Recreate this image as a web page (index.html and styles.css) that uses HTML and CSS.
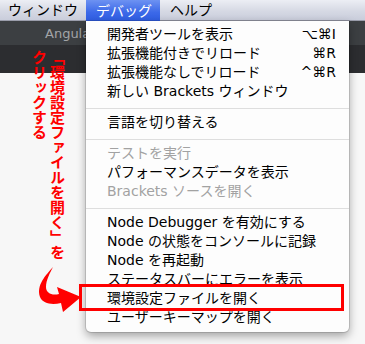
FILE: index.html
```html
<!DOCTYPE html>
<html lang="ja">
<head>
<meta charset="utf-8">
<title>Brackets デバッグメニュー</title>
<link rel="stylesheet" href="styles.css">
</head>
<body>
<div class="screen">
  <div class="menubar">
    <span class="mb-item first">ウィンドウ</span>
    <span class="mb-item active">デバッグ</span>
    <span class="mb-item">ヘルプ</span>
  </div>
  <div class="tabbar"><span class="tab-title">Angular</span></div>
  <div class="darkband"></div>
  <div class="content"></div>

  <div class="menu">
    <div class="mi"><span>開発者ツールを表示</span><span class="sc">⌥⌘I</span></div>
    <div class="mi"><span>拡張機能付きでリロード</span><span class="sc">⌘R</span></div>
    <div class="mi"><span>拡張機能なしでリロード</span><span class="sc">^⌘R</span></div>
    <div class="mi"><span>新しい Brackets ウィンドウ</span></div>
    <div class="sep"></div>
    <div class="mi"><span>言語を切り替える</span></div>
    <div class="sep"></div>
    <div class="mi disabled"><span>テストを実行</span></div>
    <div class="mi"><span>パフォーマンスデータを表示</span></div>
    <div class="mi disabled"><span>Brackets ソースを開く</span></div>
    <div class="sep"></div>
    <div class="mi"><span>Node Debugger を有効にする</span></div>
    <div class="mi"><span>Node の状態をコンソールに記録</span></div>
    <div class="mi"><span>Node を再起動</span></div>
    <div class="mi"><span>ステータスバーにエラーを表示</span></div>
    <div class="mi"><span>環境設定ファイルを開く</span></div>
    <div class="mi"><span>ユーザーキーマップを開く</span></div>
  </div>

  <div class="highlight-box"></div>
  <div class="note">「環境設定ファイルを開く」を<br>クリックする</div>
  <svg class="arrow" width="55" height="55" viewBox="30 262 55 55" aria-hidden="true">
    <path d="M53 267 C46 275 36 285 40 297 C43 304 52 305 61 303 L63 312 L81 297 L57 287 L59 294 C52 296 46 293 46 287 C46 280 50 273 53 267 Z" fill="#ff0000"/>
  </svg>
</div>
</body>
</html>
```

FILE: styles.css
```css
html, body {
  margin: 0;
  padding: 0;
}

body {
  width: 365px;
  height: 344px;
  overflow: hidden;
  font-family: "DejaVu Sans", "Noto Sans CJK JP", sans-serif;
}

.screen {
  position: relative;
  width: 365px;
  height: 344px;
  display: flex;
  flex-direction: column;
  overflow: hidden;
  background: #f7f7f7;
}

.menubar {
  height: 21px;
  flex: none;
  display: flex;
  align-items: stretch;
  background: linear-gradient(#eceef4, #d6d9e4 55%, #c9cddb);
  border-bottom: 1px solid #9a9dab;
  box-sizing: border-box;
  font-size: 14px;
  color: #000;
}

.mb-item {
  display: flex;
  align-items: center;
  padding: 0 8px 0 10px;
  line-height: 20px;
}

.mb-item.first {
  padding: 0 8px 0 8px;
}

.mb-item.active {
  color: #fff;
  background: linear-gradient(#6d92f2, #3b68e8 60%, #2f5de2);
  margin-bottom: -1px;
}

.tabbar {
  height: 24px;
  flex: none;
  background: #3c3f42;
  display: flex;
  align-items: center;
  padding-left: 45px;
}

.tab-title {
  font-size: 13px;
  color: #a3a5a8;
}

.darkband {
  height: 28px;
  flex: none;
  background: #2c2d30;
}

.content {
  flex: 1;
  background: #f7f7f7;
}

.menu {
  position: absolute;
  left: 86px;
  top: 21px;
  width: 263px;
  box-sizing: border-box;
  padding: 4px 0 5px;
  background: #fdfdfd;
  border-radius: 0 0 5px 5px;
  box-shadow: 0 4px 10px rgba(0, 0, 0, 0.35), 0 0 0 1px rgba(0, 0, 0, 0.12);
  font-size: 14px;
  color: #000;
}

.mi {
  height: 19px;
  line-height: 19px;
  display: flex;
  justify-content: space-between;
  padding: 0 13px 0 21px;
  white-space: nowrap;
}

.mi.disabled {
  color: #a2a2a2;
}

.sc {
  font-family: "DejaVu Sans", sans-serif;
}

.sep {
  height: 1px;
  margin: 7px 0 4px;
  background: #dedede;
}

.highlight-box {
  position: absolute;
  left: 79px;
  top: 284px;
  width: 265px;
  height: 27px;
  box-sizing: border-box;
  border: 3px solid #ff0000;
}

.note {
  position: absolute;
  left: 30px;
  top: 50px;
  writing-mode: vertical-rl;
  font-family: "Noto Sans CJK JP", sans-serif;
  font-weight: 700;
  font-size: 15px;
  line-height: 18px;
  color: #ff0000;
}

.arrow {
  position: absolute;
  left: 30px;
  top: 262px;
}
```
